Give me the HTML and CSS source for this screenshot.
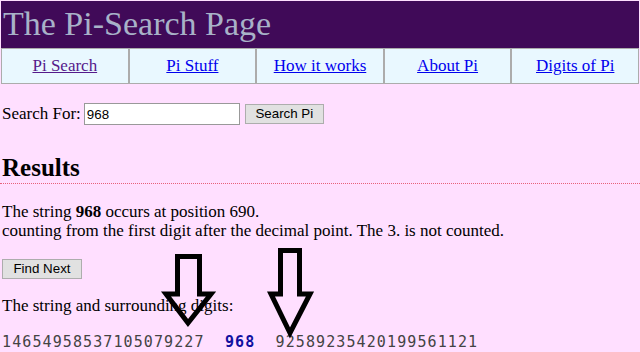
FILE: index.html
```html
<!DOCTYPE html>
<html lang="en">
<head>
  <meta charset="UTF-8" />
  <title>The Pi-Search Page</title>
  <link rel="stylesheet" href="styles.css">
</head>
<body>
  <div class="header">
    <h1>The Pi-Search Page</h1>
  </div>
  <table class="nav">
    <tr>
      <td><a href="#" class="visited">Pi Search</a></td>
      <td><a href="#">Pi Stuff</a></td>
      <td><a href="#">How it works</a></td>
      <td><a href="#">About Pi</a></td>
      <td><a href="#">Digits of Pi</a></td>
    </tr>
  </table>

  <div class="content">
    <form class="search">
      <label for="q">Search For:</label>
      <input type="text" id="q" name="q" value="968" />
      <button type="submit">Search Pi</button>
    </form>

    <h2>Results</h2>
    <p class="found">The string <b>968</b> occurs at position 690.<br>
    counting from the first digit after the decimal point. The 3. is not counted.</p>

    <button class="next" type="button">Find Next</button>

    <p class="around">The string and surrounding digits:</p>
    <div class="digits">14654958537105079227  <b>968</b>  92589235420199561121</div>
  </div>

  <svg class="arrows" width="640" height="352" viewBox="0 0 640 352">
    <polygon points="177.5,256.5 199.5,256.5 199.5,294 211,294 188,323 166,294 177.5,294" />
    <polygon points="280.5,250.5 299.5,250.5 299.5,294 310,294 290,333 271,294 280.5,294" />
  </svg>
</body>
</html>
```

FILE: styles.css
```css
html, body {
  margin: 0;
  padding: 0;
}
body {
  background: #ffdfff;
  font-family: "Liberation Serif", "Times New Roman", serif;
  font-size: 17px;
  color: #000;
  width: 640px;
  height: 352px;
  overflow: hidden;
  position: relative;
}
.header {
  background: #400a58;
  margin: 1px 1px 0 1px;
  height: 47px;
  box-sizing: border-box;
  padding: 4px 0 0 2px;
}
.header h1 {
  margin: 0;
  font-weight: normal;
  font-size: 34px;
  line-height: 38px;
  color: #a8b2c8;
}
.nav {
  width: 638px;
  margin-left: 1px;
  border-collapse: separate;
  border-spacing: 0;
  background: #e9f8ff;
  table-layout: fixed;
  font-size: 17px;
}
.nav td {
  border: 1px solid #acacac;
  height: 34px;
  padding: 0;
  text-align: center;
}
.nav a {
  color: #0000ee;
}
.nav a.visited {
  color: #551a8b;
}
.content {
  padding: 0 2px;
}
.search {
  display: flex;
  align-items: center;
  margin: 19px 0 0;
  height: 22px;
}
.search input {
  width: 156px;
  height: 22px;
  box-sizing: border-box;
  margin: 0 0 0 3px;
  border: 1px solid #999;
  padding: 1px 2px;
  font-family: "Liberation Sans", Arial, sans-serif;
  font-size: 13.33px;
  background: #fff;
}
.search button, .next {
  font-family: "Liberation Sans", Arial, sans-serif;
  font-size: 13.33px;
  background: #e1e1e1;
  border: 1px solid #adadad;
  padding: 1px 9px;
  height: 20px;
  line-height: 16px;
  color: #000;
}
.search button {
  margin-left: 5px;
  width: 79px;
}
h2 {
  margin: 29px 0 0 -2px;
  padding: 0 2px 1px;
  font-size: 25px;
  line-height: 28px;
  border-bottom: 1px dotted #e8607a;
  width: 640px;
  box-sizing: border-box;
}
.found {
  margin: 18px 0 0;
  line-height: 19px;
}
.next {
  margin-top: 19px;
  width: 80px;
  display: block;
}
.around {
  margin: 17px 0 0;
  line-height: 19px;
}
.digits {
  margin-top: 18px;
  font-family: "DejaVu Sans Mono", monospace;
  font-size: 15px;
  letter-spacing: 1.1px;
  color: #444;
  white-space: pre;
}
.digits b {
  color: #1010a0;
}
.arrows {
  position: absolute;
  left: 0;
  top: 0;
  pointer-events: none;
}
.arrows polygon {
  fill: none;
  stroke: #000;
  stroke-width: 5;
}
```
